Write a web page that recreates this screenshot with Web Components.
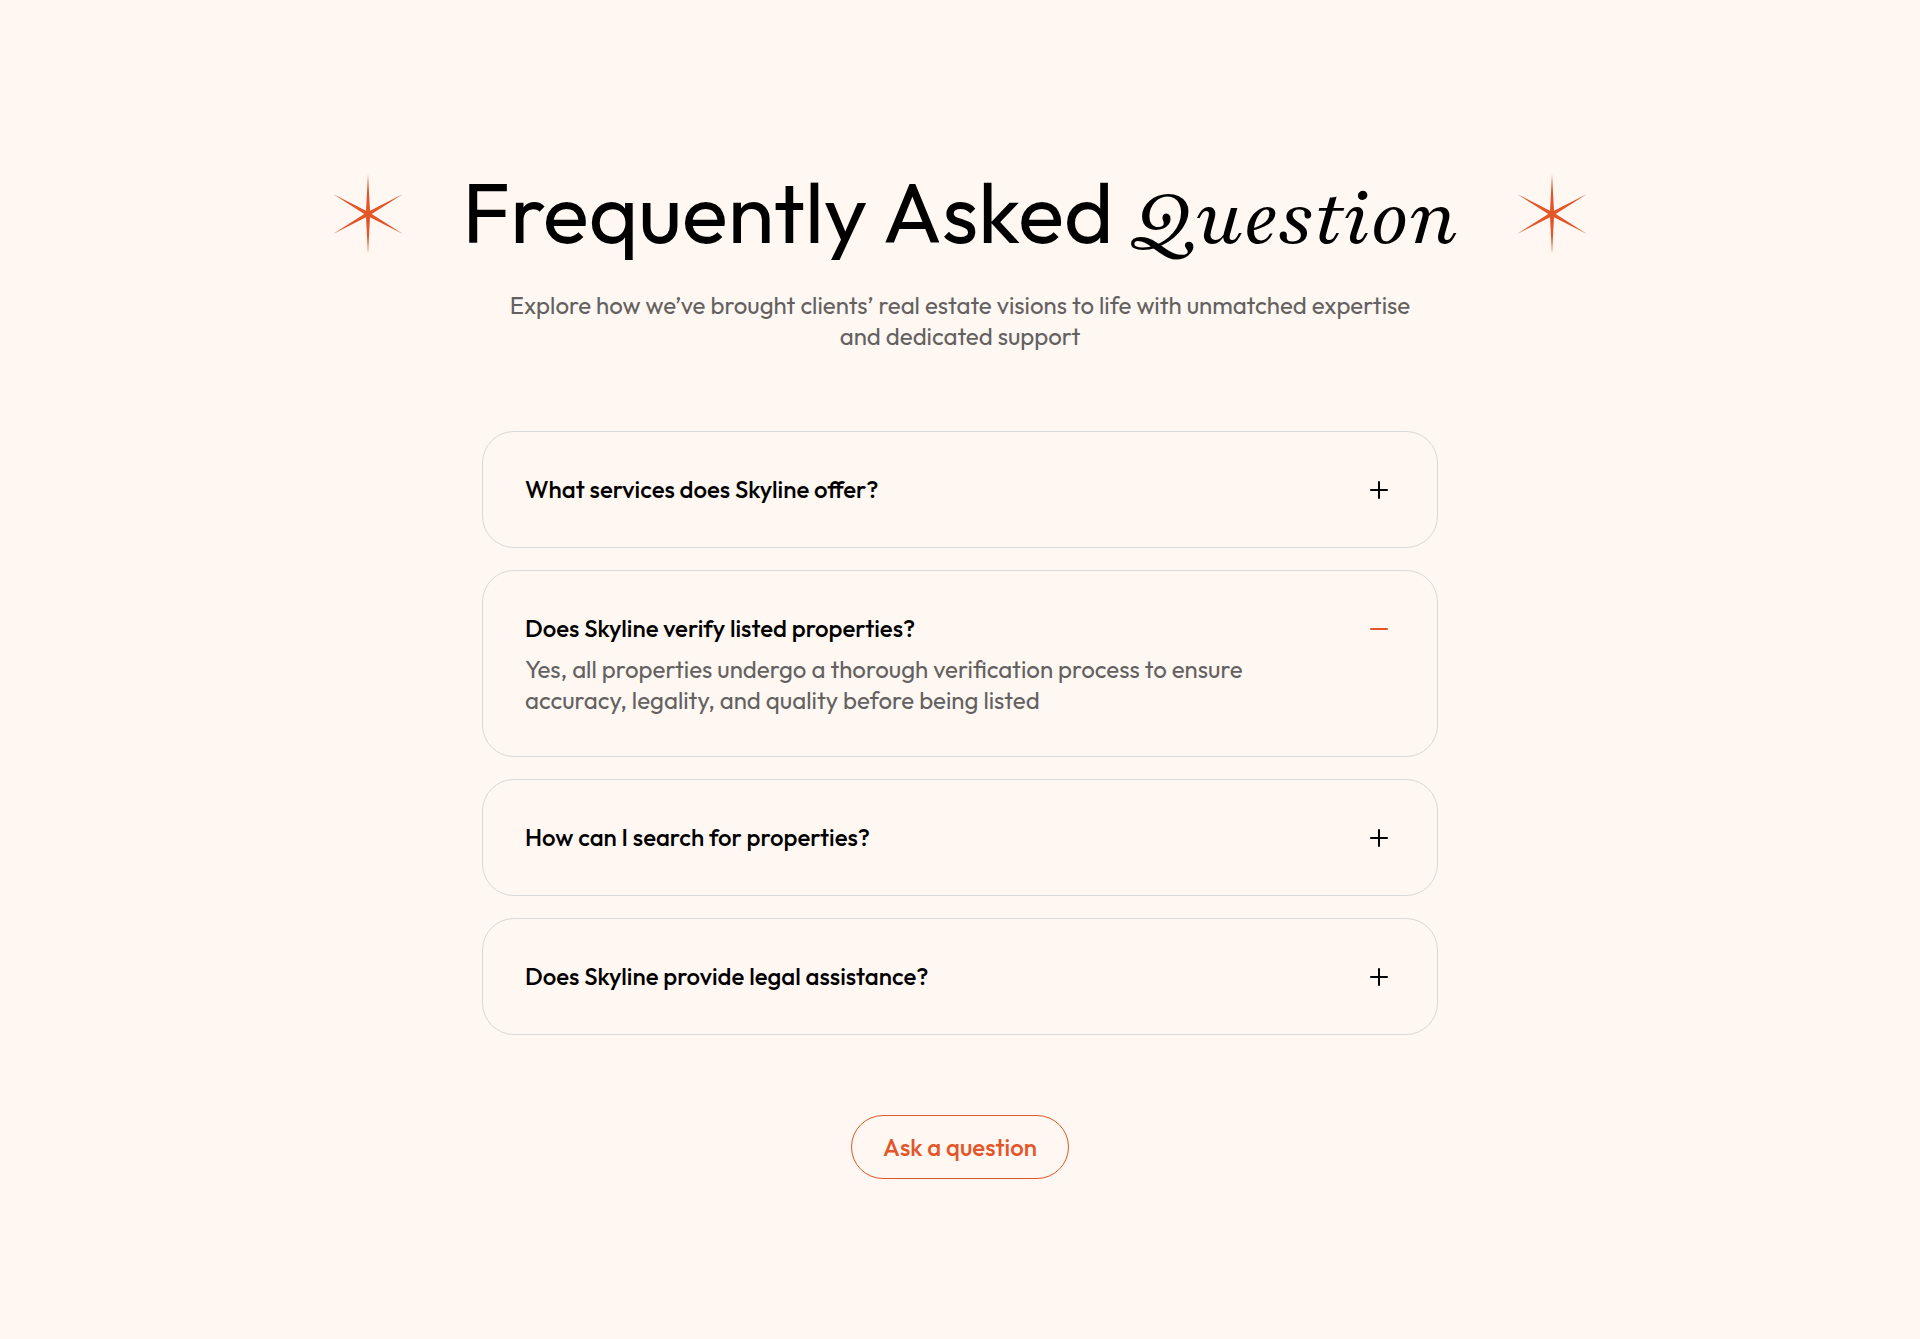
<!DOCTYPE html>
<html lang="en">
<head>
<meta charset="utf-8">
<meta name="viewport" content="width=device-width, initial-scale=1">
<title>Frequently Asked Question</title>
<style>
  :root {
    --paper: #fff7f2;
    --ink: #000000;
    --muted: #636160;
    --line: #d9d9d9;
    --accent: #e3562a;
    --sans: Outfit, Lato, "Liberation Sans", sans-serif;
    --serif: Playfair, "Playfair Display", "Liberation Serif", serif;
  }
  body {
    margin: 0;
    min-height: 100vh;
    background: var(--paper);
    color: var(--ink);
    font-family: var(--sans);
    font-size: 24px;
    line-height: 31px;
  }
</style>
</head>
<body>
<faq-section>
  <faq-heading slot="heading">Frequently Asked <em slot="accent">Question</em></faq-heading>
  <span slot="intro">Explore how we’ve brought clients’ real estate visions to life with unmatched expertise and dedicated support</span>
  <faq-item question="What services does Skyline offer?"></faq-item>
  <faq-item question="Does Skyline verify listed properties?" open>Yes, all properties undergo a thorough verification process to ensure accuracy, legality, and quality before being listed</faq-item>
  <faq-item question="How can I search for properties?"></faq-item>
  <faq-item question="Does Skyline provide legal assistance?"></faq-item>
  <pill-button slot="action">Ask a question</pill-button>
</faq-section>

<script>
  const attach = (host, markup) => {
    host.attachShadow({ mode: 'open' }).innerHTML = markup;
  };

  class StarMark extends HTMLElement {
    constructor() {
      super();
      attach(this, `
        <style>
          :host { display: block; flex: none; color: var(--accent); }
          svg { display: block; }
        </style>
        <svg width="70" height="80" viewBox="-35 -40 70 80" fill="currentColor" aria-hidden="true">
          <path d="M0-40L2-3.2L35-20L3.7 0L35 20L2 3.2L0 40L-2 3.2L-35 20L-3.7 0L-35-20L-2-3.2Z"/>
        </svg>`);
    }
  }

  class FaqHeading extends HTMLElement {
    constructor() {
      super();
      attach(this, `
        <style>
          :host { display: flex; align-items: center; justify-content: center; gap: 59px; }
          h1 { margin: 0; padding-bottom: 4px; font-size: 85px; line-height: 104px; font-weight: 400; text-align: center; }
          ::slotted(em) { font-family: var(--serif); line-height: 1; font-style: italic; }
        </style>
        <star-mark></star-mark>
        <h1><slot></slot><slot name="accent"></slot></h1>
        <star-mark></star-mark>`);
    }
  }

  class FaqItem extends HTMLElement {
    constructor() {
      super();
      attach(this, `
        <style>
          :host { display: block; padding: 42px; border: 1px solid var(--line); border-radius: 32px; }
          :host([open]) { padding-bottom: 40px; }
          h2 { margin: 0; font: inherit; }
          button {
            display: flex; align-items: center; justify-content: space-between;
            width: 100%; padding: 0 7px 0 0; border: 0; background: none;
            color: inherit; font: inherit; font-weight: 500; text-align: left; cursor: pointer;
          }
          svg { display: block; flex: none; stroke: currentColor; stroke-width: 2; stroke-linecap: round; }
          .answer { max-width: 740px; margin-top: 10px; color: var(--muted); }
          :host(:not([open])) .answer, :host([open]) .bar { display: none; }
          :host([open]) svg { color: var(--accent); }
        </style>
        <h2><button type="button" aria-controls="answer"><span></span>
          <svg width="18" height="18" viewBox="0 0 18 18" aria-hidden="true"><path d="M1 9H17"/><path class="bar" d="M9 1V17"/></svg>
        </button></h2>
        <div class="answer" id="answer"><slot></slot></div>`);
      this.button = this.shadowRoot.querySelector('button');
      this.button.addEventListener('click', () => this.toggleAttribute('open'));
    }
    static get observedAttributes() { return ['open', 'question']; }
    attributeChangedCallback() { this.render(); }
    connectedCallback() { this.render(); }
    render() {
      this.shadowRoot.querySelector('span').textContent = this.getAttribute('question');
      this.button.setAttribute('aria-expanded', this.hasAttribute('open'));
    }
  }

  class PillButton extends HTMLElement {
    constructor() {
      super();
      attach(this, `
        <style>
          :host { display: block; }
          button {
            display: block; padding: 16px 31px; border: 1px solid var(--accent); border-radius: 32px;
            background: none; color: var(--accent); font: inherit; line-height: 30px; font-weight: 500; cursor: pointer;
          }
        </style>
        <button type="button"><slot></slot></button>`);
    }
  }

  class FaqSection extends HTMLElement {
    constructor() {
      super();
      attach(this, `
        <style>
          :host { display: flex; flex-direction: column; align-items: center; padding: 160px 24px; }
          p { max-width: 920px; margin: 22px 0 79px; color: var(--muted); text-align: center; }
          .list { display: flex; flex-direction: column; gap: 22px; box-sizing: border-box; width: 100%; max-width: 956px; }
          .action { margin-top: 80px; }
        </style>
        <slot name="heading"></slot>
        <p><slot name="intro"></slot></p>
        <div class="list"><slot></slot></div>
        <div class="action"><slot name="action"></slot></div>`);
    }
  }

  customElements.define('star-mark', StarMark);
  customElements.define('faq-heading', FaqHeading);
  customElements.define('faq-item', FaqItem);
  customElements.define('pill-button', PillButton);
  customElements.define('faq-section', FaqSection);
</script>
</body>
</html>
